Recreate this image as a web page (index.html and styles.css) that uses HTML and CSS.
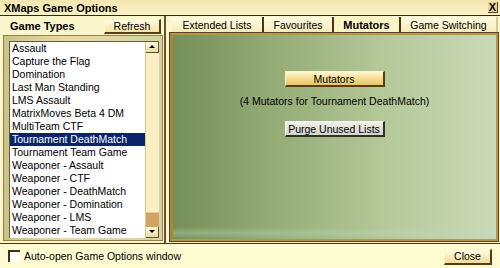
FILE: index.html
```html
<!DOCTYPE html>
<html lang="en">
<head>
    <meta charset="UTF-8">
    <title>XMaps Game Options</title>
    <link rel="stylesheet" href="styles.css">
</head>
<body>
    <div class="window">
        <div class="titlebar">
            <span class="title">XMaps Game Options</span>
            <span class="close-x">X</span>
        </div>
        <div class="main">
            <div class="left">
                <div class="left-head">
                    <span class="left-title">Game Types</span>
                    <button class="btn btn-refresh">Refresh</button>
                </div>
                <div class="list-frame">
                    <div class="listbox">
                        <ul class="items">
                            <li>Assault</li>
                            <li>Capture the Flag</li>
                            <li>Domination</li>
                            <li>Last Man Standing</li>
                            <li>LMS Assault</li>
                            <li>MatrixMoves Beta 4 DM</li>
                            <li>MultiTeam CTF</li>
                            <li class="selected">Tournament DeathMatch</li>
                            <li>Tournament Team Game</li>
                            <li>Weaponer - Assault</li>
                            <li>Weaponer - CTF</li>
                            <li>Weaponer - DeathMatch</li>
                            <li>Weaponer - Domination</li>
                            <li>Weaponer - LMS</li>
                            <li>Weaponer - Team Game</li>
                        </ul>
                        <div class="scrollbar">
                            <div class="arrow arrow-up"></div>
                            <div class="track"></div>
                            <div class="thumb"></div>
                            <div class="arrow arrow-down"></div>
                        </div>
                    </div>
                </div>
            </div>
            <div class="right">
                <div class="tabs">
                    <div class="tab">Extended Lists</div>
                    <div class="tab">Favourites</div>
                    <div class="tab active">Mutators</div>
                    <div class="tab">Game Switching</div>
                </div>
                <div class="tab-body">
                    <button class="btn btn-gold btn-wide">Mutators</button>
                    <div class="info">(4 Mutators for Tournament DeathMatch)</div>
                    <button class="btn btn-grey btn-wide">Purge Unused Lists</button>
                </div>
            </div>
        </div>
        <div class="footer">
            <label class="check"><span class="box"></span>Auto-open Game Options window</label>
            <button class="btn btn-close">Close</button>
        </div>
    </div>
</body>
</html>
```

FILE: styles.css
```css
body {
    margin: 0;
    font-family: "Liberation Sans", Arial, sans-serif;
    font-size: 10.5px;
    color: #000;
    background: #fffcd4;
}
.window {
    width: 500px;
    height: 268px;
    display: flex;
    flex-direction: column;
    overflow: hidden;
}
.titlebar {
    height: 15px;
    display: flex;
    align-items: center;
    justify-content: space-between;
    padding: 0 2px 0 4px;
    background: linear-gradient(#f4e6b0, #fbf3c8);
    border-bottom: 1px solid #3c2810;
}
.title {
    font-weight: bold;
    font-size: 11px;
}
.close-x {
    font-weight: bold;
    font-size: 11px;
    width: 9px;
    height: 10px;
    line-height: 10px;
    text-align: center;
    background: #e8d490;
    border-right: 1px solid #5a4020;
    border-bottom: 1px solid #5a4020;
}
.main {
    height: 227px;
    display: flex;
    background: #fcf6cc;
    border-bottom: 1px solid #4a3418;
}
.left {
    width: 162px;
    display: flex;
    flex-direction: column;
    padding: 0 0 0 3px;
    border-right: 1px solid #6a5028;
}
.left-head {
    height: 20px;
    display: flex;
    align-items: center;
    justify-content: space-between;
    padding: 0 3px 0 7px;
}
.left-title {
    font-weight: bold;
    font-size: 11px;
}
.btn {
    font-family: "Liberation Sans", Arial, sans-serif;
    font-size: 10.5px;
    color: #000;
    padding: 0;
    cursor: pointer;
    border: 1px solid #fff6c8;
    border-right: 2px solid #5a3c14;
    border-bottom: 2px solid #5a3c14;
}
.btn-refresh {
    width: 57px;
    height: 15px;
    margin-top: 1px;
    background: linear-gradient(#fffbe0, #f4e4a8);
}
.list-frame {
    flex: 1;
    margin-bottom: 2px;
    margin-right: 1px;
    padding: 5px 3px 3px 5px;
    border: 1px solid #9a7e44;
    background: linear-gradient(90deg, #c8c488, #e6dca8 40%, #d8d2a4);
}
.listbox {
    height: 100%;
    display: flex;
    background: #fff;
    border-top: 1px solid #6a5838;
    border-left: 1px solid #6a5838;
}
.items {
    flex: 1;
    list-style: none;
    margin: 0;
    padding: 0;
}
.items li {
    height: 13px;
    line-height: 13px;
    padding-left: 2px;
    white-space: nowrap;
}
.items li.selected {
    background: #0a246a;
    color: #fff;
}
.scrollbar {
    width: 13px;
    display: flex;
    flex-direction: column;
    background: #faf0c4;
    border-left: 1px solid #d8c890;
}
.arrow {
    height: 10px;
    position: relative;
    background: linear-gradient(#fff9e0, #eadca4);
    border-right: 1px solid #6a5028;
    border-bottom: 1px solid #6a5028;
}
.arrow::after {
    content: "";
    position: absolute;
    left: 3px;
    top: 3px;
    border-left: 3px solid transparent;
    border-right: 3px solid transparent;
}
.arrow-up::after {
    border-bottom: 3px solid #000;
}
.arrow-down::after {
    border-top: 3px solid #000;
}
.track {
    flex: 1;
}
.thumb {
    height: 14px;
    background: #d2a464;
    border-top: 1px solid #e8c88c;
}
.right {
    flex: 1;
    display: flex;
    flex-direction: column;
    padding: 0 2px 0 4px;
    border-left: 1px solid #6a5028;
}
.tabs {
    height: 17px;
    display: flex;
    padding-left: 2px;
}
.tab {
    height: 16px;
    margin-top: 1px;
    line-height: 16px;
    text-align: center;
    background: linear-gradient(#fffce4, #f6eab8);
    border-right: 2px solid #4a3418;
}
.tab:nth-child(1) { width: 90px; }
.tab:nth-child(2) { width: 68px; }
.tab:nth-child(3) { width: 65px; }
.tab:nth-child(4) { width: 95px; border-right: 2px solid #d8c890; }
.tab.active {
    font-weight: bold;
    font-size: 11px;
    background: #fdf4c6;
}
.tab-body {
    flex: 1;
    display: flex;
    flex-direction: column;
    align-items: center;
    padding-top: 36px;
    border: 2px solid #b89848;
    border-left: 3px solid #a88838;
    outline: 1px solid #5a4420;
    margin-bottom: 2px;
    background:
        linear-gradient(transparent 94%, rgba(190, 215, 195, 0.35) 97%, transparent),
        linear-gradient(90deg, #758f58, #93ab74 30%, #b4c898 65%, #cadab8);
}
.btn-wide {
    width: 100px;
    height: 16px;
}
.btn-gold {
    background: linear-gradient(#fff8d0, #f2d888 60%, #e8c468);
}
.btn-grey {
    background: linear-gradient(#f0f0e8, #d4d4cc);
    border-color: #fafaf4;
    border-right-color: #303028;
    border-bottom-color: #303028;
}
.info {
    margin: 8px 0 14px;
    white-space: nowrap;
}
.footer {
    flex: 1;
    display: flex;
    align-items: center;
    justify-content: space-between;
    padding: 0 8px 0 8px;
    background: #fffcd2;
}
.check {
    display: flex;
    align-items: center;
}
.box {
    width: 10px;
    height: 10px;
    margin-right: 4px;
    background: #fff;
    border-top: 2px solid #403020;
    border-left: 2px solid #403020;
}
.btn-close {
    width: 48px;
    height: 16px;
    margin-top: 1px;
    background: linear-gradient(#fffce4, #f0dc98);
}
```
